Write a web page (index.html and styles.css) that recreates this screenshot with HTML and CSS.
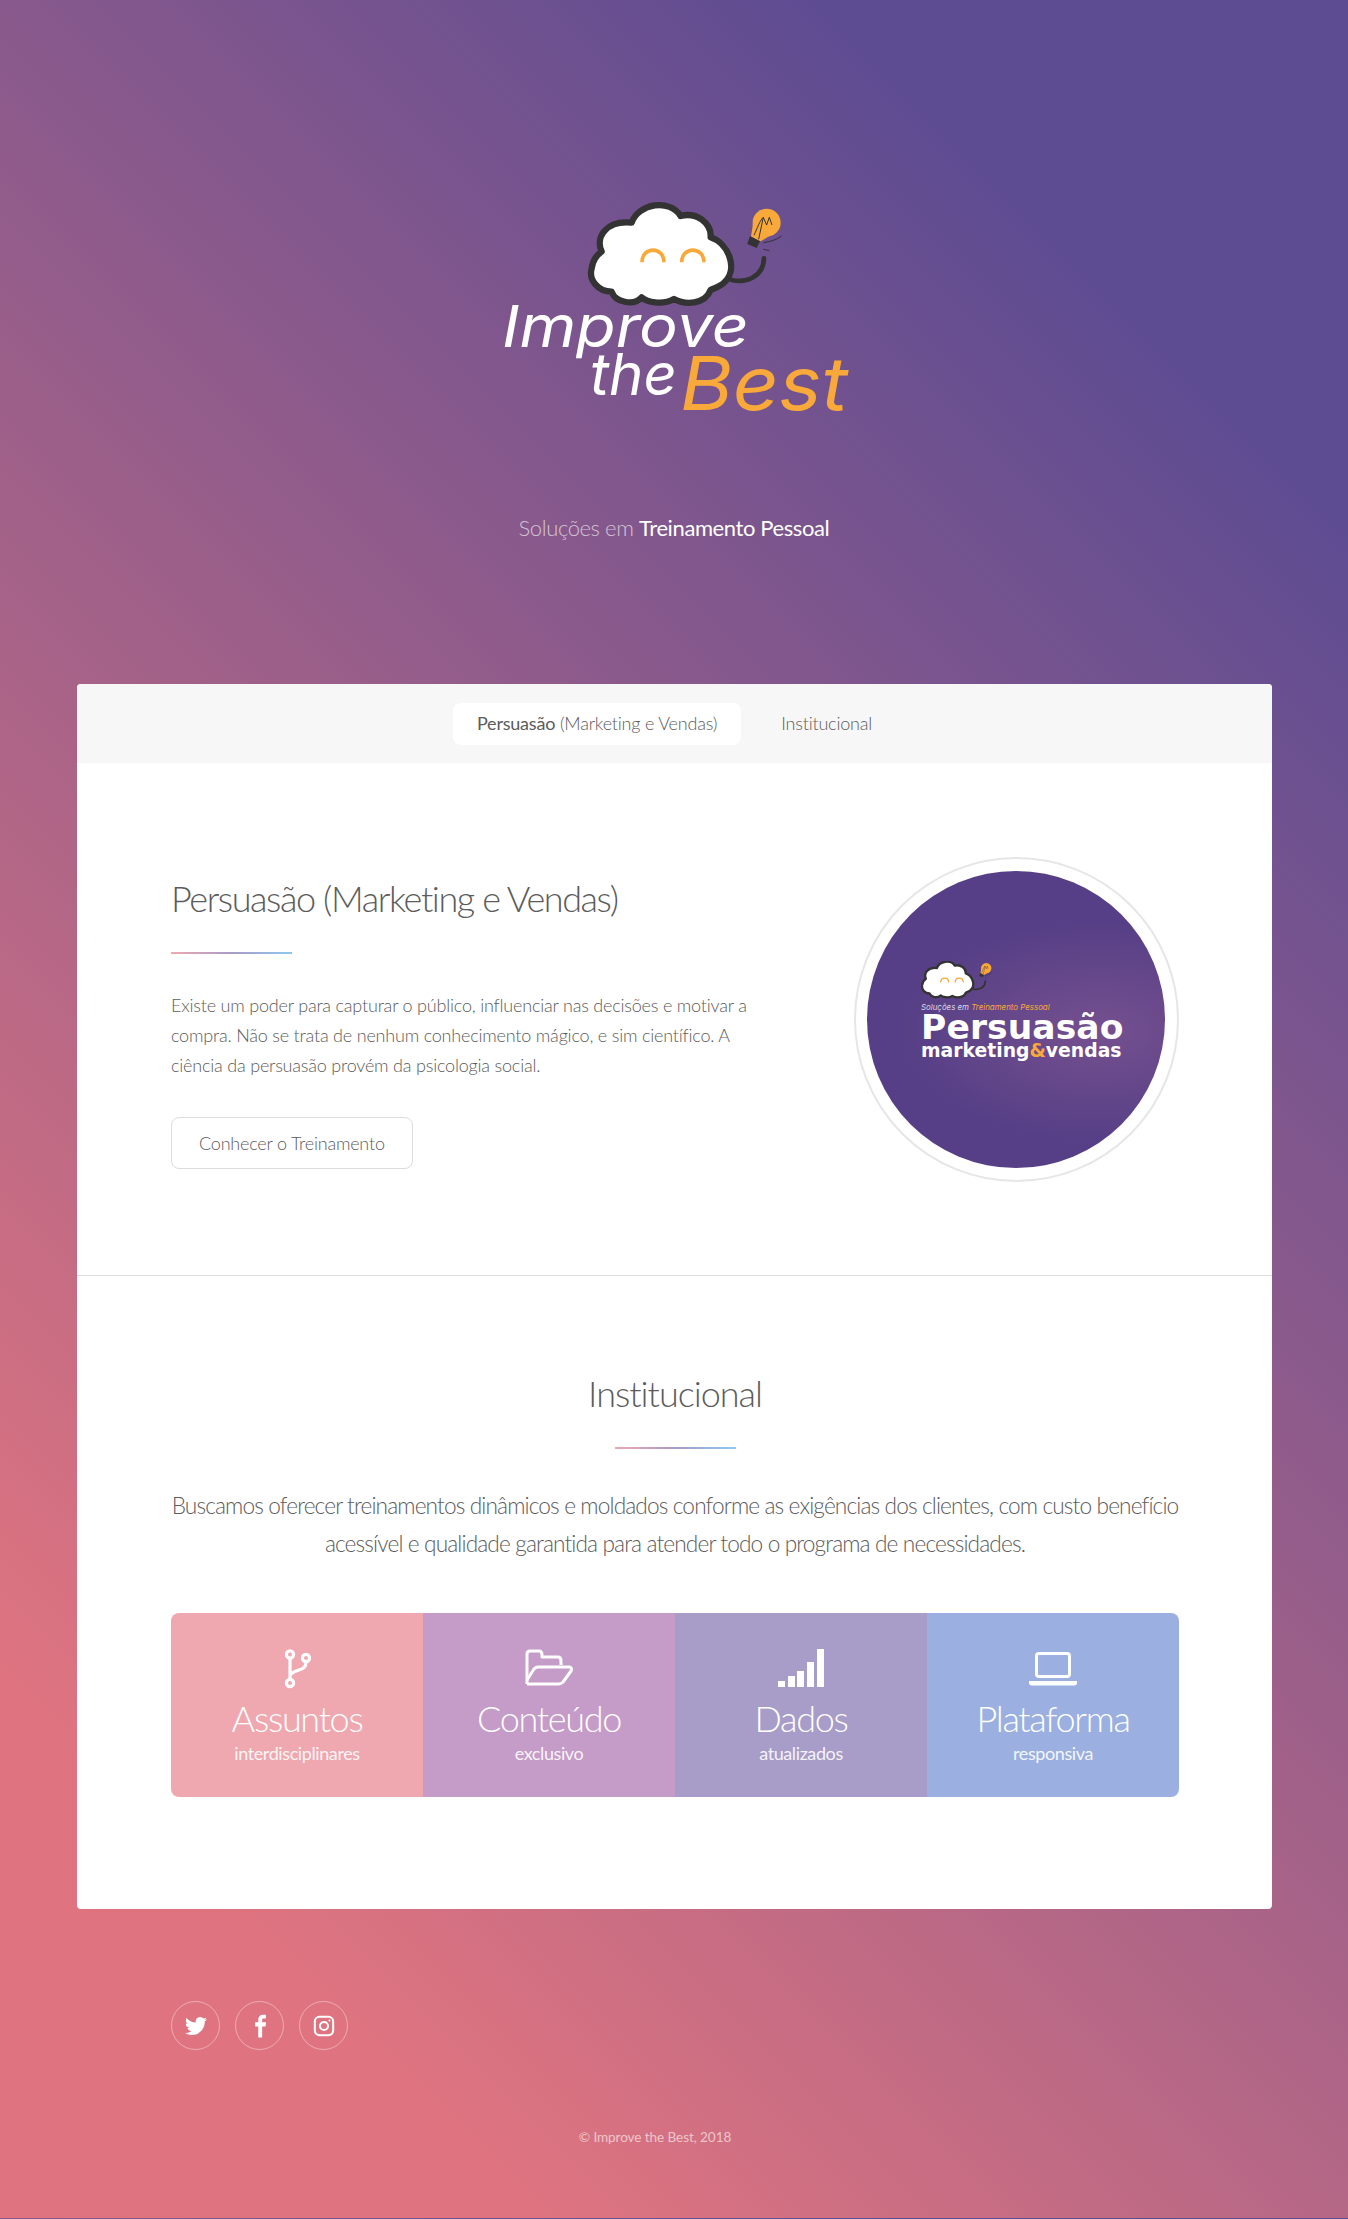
FILE: index.html
```html
<!DOCTYPE html>
<html lang="pt-BR">
<head>
    <meta charset="UTF-8">
    <meta name="viewport" content="width=device-width, initial-scale=1.0">
    <title>Improve the Best</title>
    <link rel="stylesheet" href="styles.css">
</head>
<body>
    <header class="site-header">
        <svg class="logo" viewBox="0 0 408 270" width="408" height="270" role="img" aria-label="Improve the Best">
            <defs>
                <g id="mark">
                    <path d="M485 128C505 70 600 55 632 108C680 95 725 130 722 172C775 190 805 265 765 305C755 318 740 322 722 330C705 375 645 375 612 357C575 378 530 365 515 352C490 380 435 365 425 335C385 335 355 300 365 265C368 245 380 225 395 215C375 170 410 120 485 128Z" fill="#fff" stroke="#333" stroke-width="19" stroke-linejoin="round"/>
                    <path d="M785 300C830 310 880 290 882 235" fill="none" stroke="#333" stroke-width="14" stroke-linecap="round"/>
                    <path d="M516 247C516 198 582 198 582 247M635 247C635 198 702 198 702 247" fill="none" stroke="#f9a93a" stroke-width="11"/>
                    <circle cx="890" cy="128" r="42" fill="#f9a93a"/>
                    <path d="M852 112L843 170L872 184L912 160Z" fill="#f9a93a"/>
                    <path d="M840 168L870 184L860 204L832 192Z" fill="#333"/>
                    <path d="M866 178L880 112L890 135L898 112L906 135M880 112C870 120 862 145 852 166M880 188C900 185 920 180 935 168M880 208L898 212" fill="none" stroke="#333" stroke-width="3"/>
                </g>
            </defs>
            <use href="#mark" transform="scale(0.3333)"/>
            <text class="logo-word" x="32" y="167" font-size="58" textLength="247" lengthAdjust="spacingAndGlyphs">Improve</text>
            <text class="logo-word" x="120" y="215" font-size="58" textLength="87" lengthAdjust="spacingAndGlyphs">the</text>
            <text class="logo-word logo-best" x="210" y="230" font-size="74" textLength="168" lengthAdjust="spacingAndGlyphs">Best</text>
        </svg>
        <p class="tagline">Soluções em <strong>Treinamento Pessoal</strong></p>
    </header>

    <main class="card">
        <nav class="tabs">
            <a class="tab active" href="#persuasao"><b>Persuasão</b> (Marketing e Vendas)</a>
            <a class="tab" href="#institucional">Institucional</a>
        </nav>

        <section class="spotlight" id="persuasao">
            <div class="spotlight-text">
                <h2>Persuasão (Marketing e Vendas)</h2>
                <div class="rule"></div>
                <p>Existe um poder para capturar o público, influenciar nas decisões e motivar a compra. Não se trata de nenhum conhecimento mágico, e sim científico. A ciência da persuasão provém da psicologia social.</p>
                <a class="button" href="#">Conhecer o Treinamento</a>
            </div>
            <div class="badge-ring">
                <div class="badge">
                    <svg class="badge-logo" viewBox="0 0 80 40" width="80" height="40">
                        <use href="#mark" transform="scale(0.122) translate(-355 -70)"/>
                    </svg>
                    <p class="badge-small">Soluções em <em>Treinamento Pessoal</em></p>
                    <p class="badge-title">Persuasão</p>
                    <p class="badge-sub">marketing<i>&amp;</i>vendas</p>
                </div>
            </div>
        </section>

        <section class="institutional" id="institucional">
            <h2>Institucional</h2>
            <div class="rule"></div>
            <p class="lead">Buscamos oferecer treinamentos dinâmicos e moldados conforme as exigências dos clientes, com custo benefício acessível e qualidade garantida para atender todo o programa de necessidades.</p>
            <ul class="stats">
                <li class="stat stat-pink">
                    <svg viewBox="0 0 40 40" width="40" height="40" fill="none" stroke="#fff" stroke-width="3.200">
                        <circle cx="13" cy="5.500" r="3.600"/><circle cx="13" cy="34" r="3.600"/><circle cx="29" cy="9" r="3.600"/>
                        <path d="M13 9V30M29 13C29 24 15 19 13 27"/>
                    </svg>
                    <strong>Assuntos</strong>
                    <span>interdisciplinares</span>
                </li>
                <li class="stat stat-orchid">
                    <svg viewBox="0 0 48 40" width="48" height="40" fill="none" stroke="#fff" stroke-width="3" stroke-linejoin="round">
                        <path d="M2 35V5C2 3 3.500 2 5 2H14C16 2 17 3.500 17 6V8H33C35 8 36 9.500 36 12V16"/>
                        <path d="M2 35H34C36 35 37 34 38 33L46 22C47 20 46.500 18 44 18H13C11 18 10 19 9 20L2 31"/>
                    </svg>
                    <strong>Conteúdo</strong>
                    <span>exclusivo</span>
                </li>
                <li class="stat stat-lavender">
                    <svg viewBox="0 0 46 40" width="46" height="40" fill="#fff">
                        <rect x="0" y="32" width="7" height="6"/><rect x="10" y="27" width="7" height="11"/><rect x="19" y="22" width="7" height="16"/><rect x="29" y="13" width="7" height="25"/><rect x="39" y="0" width="7" height="38"/>
                    </svg>
                    <strong>Dados</strong>
                    <span>atualizados</span>
                </li>
                <li class="stat stat-blue">
                    <svg viewBox="0 0 48 40" width="48" height="40" fill="none" stroke="#fff">
                        <rect x="7.500" y="4.500" width="33" height="23" rx="2.500" stroke-width="3"/>
                        <path d="M0 32H48V34C48 35.500 47 36.500 45 36.500H3C1 36.500 0 35.500 0 34Z" fill="#fff" stroke="none"/>
                    </svg>
                    <strong>Plataforma</strong>
                    <span>responsiva</span>
                </li>
            </ul>
        </section>
    </main>

    <footer class="site-footer">
        <ul class="social">
            <li><a href="#" aria-label="Twitter"><svg viewBox="0 0 24 24" width="22" height="22" fill="#fff"><path d="M23.953 4.57a10 10 0 01-2.825.775 4.958 4.958 0 002.163-2.723c-.951.555-2.005.959-3.127 1.184a4.92 4.92 0 00-8.384 4.482C7.69 8.095 4.067 6.13 1.64 3.162a4.822 4.822 0 00-.666 2.475c0 1.71.87 3.213 2.188 4.096a4.904 4.904 0 01-2.228-.616v.06a4.923 4.923 0 003.946 4.827 4.996 4.996 0 01-2.212.085 4.936 4.936 0 004.604 3.417 9.867 9.867 0 01-6.102 2.105c-.39 0-.779-.023-1.17-.067a13.995 13.995 0 007.557 2.209c9.053 0 13.998-7.496 13.998-13.985 0-.21 0-.42-.015-.63A9.935 9.935 0 0024 4.59z"/></svg></a></li>
            <li><a href="#" aria-label="Facebook"><svg viewBox="0 0 24 24" width="26" height="26" fill="#fff"><path d="M14 8.500V6.500C14 5.600 14.200 5.100 15.600 5.100H17.400V1.600C17 1.550 16 1.500 14.800 1.500C12.200 1.500 10.400 3.100 10.400 6V8.500H7.500V12.500H10.400V22.500H14V12.500H17.100L17.600 8.500Z"/></svg></a></li>
            <li><a href="#" aria-label="Instagram"><svg viewBox="0 0 24 24" width="22" height="22" fill="none" stroke="#fff" stroke-width="2.200"><rect x="2" y="2" width="20" height="20" rx="5"/><circle cx="12" cy="12" r="4.400"/><circle cx="18" cy="6" r="1.100" fill="#fff" stroke="none"/></svg></a></li>
        </ul>
        <p class="copyright">© Improve the Best, 2018</p>
    </footer>
</body>
</html>
```

FILE: styles.css
```css
body {
    font-family: Lato, "Open Sans", sans-serif;
    font-weight: 300;
    margin: 0;
    color: #5c5c5c;
    background-color: #935d8c;
    background-image: linear-gradient(45deg, #df7480 15%, #5e4c92 85%);
}
h2, p, ul {
    margin: 0;
    padding: 0;
}
a {
    color: inherit;
    text-decoration: none;
}

/* header */
.site-header {
    padding-top: 180px;
    padding-bottom: 138px;
    text-align: center;
}
.logo {
    display: block;
    margin: 0 auto;
}
.logo-word {
    font-family: Inter, sans-serif;
    font-style: italic;
    font-weight: 400;
    fill: #fff;
}
.logo-best {
    fill: #f9a93a;
}
.tagline {
    margin-top: 60px;
    font-size: 22px;
    line-height: 36px;
    letter-spacing: -0.4px;
    color: rgba(255, 255, 255, 0.65);
}
.tagline strong {
    font-weight: 400;
    color: #fff;
}

/* card */
.card {
    margin: 0 76px 0 77px;
    background-color: #fff;
    border-radius: 4px;
    overflow: hidden;
}
.tabs {
    display: flex;
    justify-content: center;
    gap: 16px;
    padding: 19px 0 18px;
    background-color: #f7f7f7;
}
.tab {
    height: 42px;
    padding: 0 24px;
    line-height: 40px;
    font-size: 18px;
    letter-spacing: -0.2px;
    border-radius: 8px;
}
.tab b {
    font-weight: 400;
}
.tab.active {
    background-color: #fff;
}

h2 {
    font-size: 36px;
    font-weight: 300;
    line-height: 47px;
    letter-spacing: -1px;
}
.rule {
    width: 121px;
    height: 2px;
    margin-top: 30px;
    background-image: linear-gradient(90deg, #efa8b0, #a89cc8, #8cc9f0);
}

.spotlight {
    display: flex;
    justify-content: space-between;
    align-items: center;
    padding: 94px 93px 93px 94px;
    border-bottom: 1px solid #dddddd;
}
.spotlight-text {
    width: 590px;
    padding-top: 4px;
}
.spotlight-text h2 {
    letter-spacing: -1.4px;
}
.spotlight-text p {
    margin-top: 36px;
    font-size: 18px;
    line-height: 30px;
    letter-spacing: -0.2px;
}
.button {
    display: inline-block;
    margin-top: 37px;
    padding: 0 27px;
    height: 50px;
    line-height: 50px;
    font-size: 18px;
    letter-spacing: -0.2px;
    border: 1px solid #dddddd;
    border-radius: 8px;
}
.badge-ring {
    box-sizing: border-box;
    width: 325px;
    height: 325px;
    padding: 12px 12px 12px 11px;
    border: 2px solid #e6e6e6;
    border-radius: 50%;
}
.badge {
    box-sizing: border-box;
    display: flex;
    flex-direction: column;
    justify-content: center;
    width: 298px;
    height: 297px;
    padding: 0 30px 18px 54px;
    border-radius: 50%;
    color: #fff;
    background-color: #563f86;
    background-image: radial-gradient(ellipse 200px 110px at 78% 54%, #75508f, #563f86);
}
.badge-logo {
    display: block;
}
.badge p {
    white-space: nowrap;
}
.badge-small {
    margin-top: 2px;
    font-family: Inter, sans-serif;
    font-size: 7.900px;
    line-height: 9px;
    font-style: italic;
    font-weight: 400;
    color: #d8d8e8;
}
.badge-small em {
    color: #f9a93a;
}
.badge-title {
    font-family: "DejaVu Sans", sans-serif;
    font-size: 34.500px;
    font-weight: 700;
    line-height: 30px;
    letter-spacing: 0.1px;
}
.badge-sub {
    font-family: "DejaVu Sans", sans-serif;
    font-size: 18.800px;
    font-weight: 700;
    line-height: 18px;
}
.badge-sub i {
    font-style: normal;
    color: #f9a93a;
}

.institutional {
    padding: 94px 93px 112px 94px;
    text-align: center;
}
.institutional .rule {
    margin-left: auto;
    margin-right: auto;
}
.lead {
    margin-top: 38px;
    font-size: 22.670px;
    line-height: 38px;
    letter-spacing: -0.87px;
}
.stats {
    display: grid;
    grid-template-columns: repeat(4, 1fr);
    margin-top: 50px;
    list-style: none;
    border-radius: 8px;
    overflow: hidden;
    color: #fff;
}
.stat {
    display: flex;
    flex-direction: column;
    align-items: center;
    height: 184px;
    padding-top: 36px;
    box-sizing: border-box;
}
.stat strong {
    margin-top: 6px;
    font-size: 36px;
    font-weight: 300;
    line-height: 46px;
    letter-spacing: -1.300px;
}
.stat span {
    margin-top: 1px;
    font-size: 18px;
    font-weight: 400;
    line-height: 22px;
    letter-spacing: -0.4px;
    color: rgba(255, 255, 255, 0.9);
}
.stat-pink { background-color: #efa8b0; }
.stat-orchid { background-color: #c59bc8; }
.stat-lavender { background-color: #a89cc8; }
.stat-blue { background-color: #9bb0e0; }

/* footer */
.site-footer {
    padding: 92px 94px 71px 171px;
    color: #fff;
}
.social {
    display: flex;
    gap: 15px;
    list-style: none;
}
.social a {
    display: flex;
    align-items: center;
    justify-content: center;
    box-sizing: border-box;
    width: 49px;
    height: 49px;
    border: 1px solid rgba(255, 255, 255, 0.4);
    border-radius: 50%;
}
.copyright {
    margin-top: 77px;
    padding-right: 115px;
    text-align: center;
    font-size: 13.600px;
    font-weight: 400;
    line-height: 20px;
    letter-spacing: -0.1px;
    color: rgba(255, 255, 255, 0.6);
}
```
